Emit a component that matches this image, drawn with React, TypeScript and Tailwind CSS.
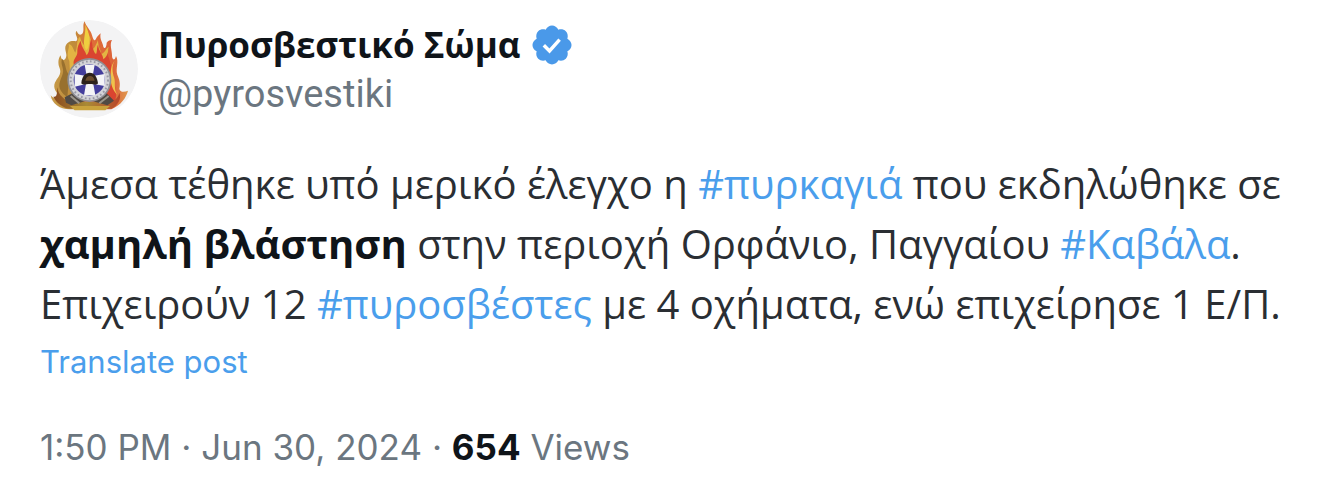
function Avatar() {
  return (
    <svg viewBox="30 30 294 294" className="size-[98px] shrink-0 rounded-full" role="img" aria-label="Πυροσβεστικό Σώμα">
      <defs>
        <linearGradient id="flame" x1="0" x2="1" y1="0" y2="0">
          <stop offset="0" stopColor="#c69a48" />
          <stop offset="0.3" stopColor="#bf8c3a" />
          <stop offset="0.5" stopColor="#df7038" />
          <stop offset="0.8" stopColor="#dc6238" />
          <stop offset="1" stopColor="#e09a50" />
        </linearGradient>
        <linearGradient id="base" x1="0" x2="1" y1="0" y2="0">
          <stop offset="0" stopColor="#8b4a1e" />
          <stop offset="0.5" stopColor="#a98a35" />
          <stop offset="1" stopColor="#b8452a" />
        </linearGradient>
      </defs>
      <circle cx="177" cy="177" r="147" fill="#f3f3f4" />
      <path d="M62 256C72 268 86 270 92 258C72 244 68 226 78 212C86 200 96 190 88 172C84 160 84 146 92 136C92 148 100 154 106 146C114 134 104 124 106 110C110 96 124 90 138 94C150 84 130 74 140 62C144 74 152 78 158 70C164 58 156 46 164 34C168 50 182 60 186 76C190 88 192 96 198 86C202 78 206 76 212 70C208 88 218 96 220 110C224 120 230 110 230 98C234 92 240 90 246 90C238 104 246 120 246 136C246 150 254 154 258 138C268 156 256 174 262 194C268 208 272 220 268 236C270 248 284 246 294 242C288 264 274 284 244 298H120C88 298 66 280 62 256Z" fill="url(#flame)" />
      <path d="M118 154C106 128 120 116 116 102C128 104 130 120 136 128C144 108 138 90 150 80C154 98 162 102 168 116C176 102 176 82 172 66C184 82 184 106 190 116C196 110 200 100 204 90C204 110 212 118 214 132C224 128 226 118 236 110C230 132 240 146 238 170L226 190L120 188Z" fill="#e3b443" />
      <path d="M132 166C126 146 144 142 142 124C142 108 148 100 152 92C154 112 166 122 170 136C182 122 176 104 184 86C188 106 188 124 198 132C202 126 200 112 204 104C206 124 220 134 220 148C228 142 232 134 234 126C236 148 246 168 248 194C250 224 268 246 252 280H214Z" fill="#da4530" />
      <path d="M166 44C174 62 182 78 176 108C174 118 168 124 166 116C156 96 168 72 166 44Z" fill="#efcf3f" />
      <path d="M96 146C90 164 104 174 98 192C92 212 78 228 100 252L112 262L118 194C104 182 110 162 96 146Z" fill="#98702e" />
      <path d="M254 152C244 168 248 188 252 202C258 218 250 234 262 254C248 242 240 218 242 196C242 178 244 164 254 152Z" fill="#efc24c" />
      <path d="M82 232C84 256 106 270 118 276H240C258 272 266 258 268 248C276 266 262 288 244 296H124C98 296 78 276 70 260C84 264 80 242 82 232Z" fill="url(#base)" />
      <path d="M120 288H240L226 301H134Z" fill="#c9a23c" />
      <path d="M104 262L130 248L230 250L252 272L232 286L176 270L124 286L108 278Z" fill="#504a44" />
      <path d="M122 258L148 280M236 258L208 280" stroke="#9a9489" strokeWidth="6" />
      <circle cx="178" cy="210" r="66" fill="#8e8e94" />
      <circle cx="178" cy="210" r="61" fill="#d3d3d8" />
      <circle cx="178" cy="210" r="56" fill="none" stroke="#9a99a5" strokeWidth="6" strokeDasharray="5 7" />
      <circle cx="178" cy="210" r="47" fill="#433d9c" />
      <path d="M164 164H194L188 198L224 192V228L190 222L196 256H162L168 222L134 230V192L170 198Z" fill="#f4f4f7" />
      <path d="M154 220C156 198 166 188 179 188C194 188 202 202 204 220C198 228 192 222 179 222C168 222 160 228 154 220Z" fill="#2c211b" />
      <path d="M166 212C168 202 174 198 180 198C188 198 192 204 194 212Z" fill="#6b4c2e" />
    </svg>
  );
}

function VerifiedBadge() {
  return (
    <svg viewBox="1.5 1.5 21 21" className="size-10 shrink-0" role="img" aria-label="Verified account">
      <path
        fill="#4a99e9"
        d="M22.25 12c0-1.43-.88-2.67-2.19-3.34.46-1.39.2-2.9-.81-3.91s-2.52-1.27-3.91-.81c-.66-1.31-1.91-2.19-3.34-2.19s-2.67.88-3.33 2.19c-1.4-.46-2.91-.2-3.92.81s-1.26 2.52-.8 3.91c-1.31.67-2.2 1.91-2.2 3.34s.89 2.67 2.2 3.34c-.46 1.39-.21 2.9.8 3.91s2.52 1.26 3.91.81c.67 1.31 1.91 2.19 3.34 2.19s2.68-.88 3.34-2.19c1.39.45 2.9.2 3.91-.81s1.27-2.52.81-3.91c1.31-.67 2.19-1.91 2.19-3.34z"
      />
      <path d="M7.7 12.1l3 3 5.3-5.9" fill="none" stroke="#fff" strokeWidth="1.8" />
    </svg>
  );
}

function Tag({ children }: { children: string }) {
  return (
    <a href={`#${children}`} className="text-[#4a9eec]">
      #{children}
    </a>
  );
}

export default function App() {
  return (
    <article className="bg-white px-10 pt-5 pb-4 font-['Inter',sans-serif] text-[#0f1419]">
      <header className="flex items-center gap-5">
        <Avatar />
        <div>
          <div className="flex items-center gap-3">
            <h1 className="font-['Open_Sans',sans-serif] text-[35px] leading-[50px] font-bold">Πυροσβεστικό Σώμα</h1>
            <VerifiedBadge />
          </div>
          <a href="#pyrosvestiki" className="block font-['Roboto',sans-serif] text-[38px] leading-[48px] text-[#6b7680]">
            @pyrosvestiki
          </a>
        </div>
      </header>
      <p className="mt-9 font-['Open_Sans',sans-serif] text-[40px] leading-[60px] text-[#2a2e33]">
        Άμεσα τέθηκε υπό μερικό έλεγχο η <Tag>πυρκαγιά</Tag> που εκδηλώθηκε σε{" "}
        <strong className="font-bold text-[#0f1419]">χαμηλή βλάστηση</strong> στην περιοχή Ορφάνιο, Παγγαίου{" "}
        <Tag>Καβάλα</Tag>.
        <br />
        Επιχειρούν 12 <Tag>πυροσβέστες</Tag> με 4 οχήματα, ενώ επιχείρησε 1 Ε/Π.
      </p>
      <button type="button" className="block text-[31px] leading-[56px] text-[#4a9eec]">
        Translate post
      </button>
      <footer className="mt-7 text-[35px] leading-[58px] text-[#6b7680]">
        <a href="#time">1:50 PM · Jun 30, 2024</a> · <strong className="font-bold text-[#0f1419]">654</strong> Views
      </footer>
    </article>
  );
}
